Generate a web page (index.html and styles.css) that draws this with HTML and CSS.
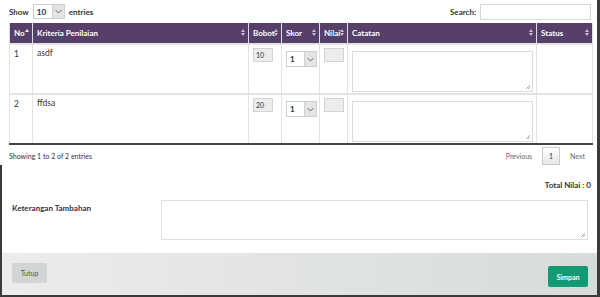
FILE: index.html
```html
<!DOCTYPE html>
<html lang="id">
<head>
    <meta charset="UTF-8">
    <title>Penilaian</title>
    <link rel="stylesheet" href="styles.css">
</head>
<body>
    <div class="modal">
        <div class="modal-top">
            <!-- kontrol atas tabel -->
            <div class="dt-top">
                <label class="dt-length">Show
                    <span class="select small"><span class="sel-val">10</span><span class="sel-btn"><svg width="7" height="5" viewBox="0 0 7 5"><path d="M0.5 1 L3.5 4 L6.5 1" fill="none" stroke="#666" stroke-width="1"/></svg></span></span>
                    entries</label>
                <label class="dt-search">Search: <input type="text" class="search-input"></label>
            </div>

            <table class="grid">
                <colgroup>
                    <col style="width:23px">
                    <col style="width:216px">
                    <col style="width:33px">
                    <col style="width:38px">
                    <col style="width:28px">
                    <col style="width:189px">
                    <col style="width:56px">
                </colgroup>
                <thead>
                    <tr>
                        <th><span>No</span><i class="sort up"></i></th>
                        <th><span>Kriteria Penilaian</span><i class="sort"></i></th>
                        <th><span>Bobot</span><i class="sort"></i></th>
                        <th><span>Skor</span><i class="sort"></i></th>
                        <th><span>Nilai</span><i class="sort"></i></th>
                        <th><span>Catatan</span><i class="sort"></i></th>
                        <th><span>Status</span><i class="sort"></i></th>
                    </tr>
                </thead>
                <tbody>
                    <tr>
                        <td>1</td>
                        <td>asdf</td>
                        <td><span class="box">10</span></td>
                        <td><span class="select skor"><span class="sel-val">1</span><span class="sel-btn"><svg width="7" height="5" viewBox="0 0 7 5"><path d="M0.5 1 L3.5 4 L6.5 1" fill="none" stroke="#666" stroke-width="1"/></svg></span></span></td>
                        <td><span class="box empty"></span></td>
                        <td><span class="note"><i class="grip"></i></span></td>
                        <td></td>
                    </tr>
                    <tr>
                        <td>2</td>
                        <td>ffdsa</td>
                        <td><span class="box">20</span></td>
                        <td><span class="select skor"><span class="sel-val">1</span><span class="sel-btn"><svg width="7" height="5" viewBox="0 0 7 5"><path d="M0.5 1 L3.5 4 L6.5 1" fill="none" stroke="#666" stroke-width="1"/></svg></span></span></td>
                        <td><span class="box empty"></span></td>
                        <td><span class="note"><i class="grip"></i></span></td>
                        <td></td>
                    </tr>
                </tbody>
            </table>

            <div class="dt-bottom">
                <div class="dt-info">Showing 1 to 2 of 2 entries</div>
                <div class="dt-pages">
                    <span class="pg">Previous</span>
                    <span class="pg current">1</span>
                    <span class="pg">Next</span>
                </div>
            </div>
        </div>

        <div class="modal-rest">
            <div class="total">Total Nilai : 0</div>
            <div class="extra">
                <div class="extra-label">Keterangan Tambahan</div>
                <span class="extra-text"><i class="grip"></i></span>
            </div>
            <div class="modal-footer">
                <button class="btn btn-close">Tutup</button>
                <button class="btn btn-save">Simpan</button>
            </div>
        </div>
    </div>
</body>
</html>
```

FILE: styles.css
```css
body, html {
    margin: 0;
    padding: 0;
    background: #3b3b3b;
    font-family: Lato, "Noto Sans", sans-serif;
    color: #333;
    height: 297px;
    overflow: hidden;
}

.modal {
    width: 597px;
    height: 296px;
    display: flex;
    flex-direction: column;
}

.modal-top {
    background: #fff;
    padding: 3px 6px 0 9px;
    height: 162px;
}

.modal-rest {
    background: #fff;
    margin-left: 2px;
    flex: 1;
    display: flex;
    flex-direction: column;
}

/* kontrol atas */
.dt-top {
    display: flex;
    justify-content: space-between;
    align-items: center;
    height: 17px;
    font-size: 8px;
    font-weight: bold;
}

.dt-length, .dt-search {
    display: flex;
    align-items: center;
    gap: 4px;
}

.search-input {
    width: 107px;
    height: 12px;
    border: 1px solid #d6d6d6;
    padding: 1px;
    margin: 0;
}

.select {
    display: inline-flex;
    border: 1px solid #cfcfcf;
    background: #fff;
    box-sizing: border-box;
    font-weight: normal;
}

.select.small {
    width: 32px;
    height: 15px;
}

.select .sel-val {
    flex: 1;
    font-size: 8px;
    padding-left: 3px;
    display: flex;
    align-items: center;
    font-weight: bold;
}

.sel-btn {
    width: 11px;
    display: flex;
    align-items: center;
    justify-content: center;
    background: #e4e4e4;
    border-left: 1px solid #cfcfcf;
}

/* tabel */
.grid {
    width: 583px;
    table-layout: fixed;
    border-collapse: collapse;
    margin-top: 3px;
    font-size: 8.5px;
    border-bottom: 2px solid #444;
}

.grid th {
    background: #563f69;
    color: #fff;
    text-align: left;
    height: 20px;
    padding: 0 4px;
    border: 1px solid #ddd;
    border-top: none;
    position: relative;
    font-size: 8px;
    white-space: nowrap;
    overflow: hidden;
}

.grid th span {
    display: block;
    overflow: hidden;
}

.sort {
    position: absolute;
    right: 3px;
    top: 6px;
    width: 0;
    height: 0;
    border-left: 2.5px solid transparent;
    border-right: 2.5px solid transparent;
    border-bottom: 3px solid #c9bfd1;
}

.sort::after {
    content: "";
    position: absolute;
    left: -2.5px;
    top: 4px;
    border-left: 2.5px solid transparent;
    border-right: 2.5px solid transparent;
    border-top: 3px solid #c9bfd1;
}

.sort.up {
    border-bottom-color: #fff;
}

.sort.up::after {
    display: none;
}

.grid td {
    height: 44px;
    vertical-align: top;
    padding: 3px 3px 0 4px;
    border: 1px solid #e3e3e3;
    border-top: 2px solid #e3e3e3;
}

.grid td:first-child {
    padding-top: 4px;
}

.box {
    display: block;
    width: 20px;
    height: 14px;
    box-sizing: border-box;
    border: 1px solid #d4d4d4;
    background: #ececec;
    font-size: 7px;
    padding: 2px;
}

.select.skor {
    width: 31px;
    height: 16px;
    margin-top: 3px;
}

.note {
    display: block;
    height: 41px;
    width: 181px;
    box-sizing: border-box;
    border: 1px solid #dcdcdc;
    margin-top: 3px;
    position: relative;
}

.grip {
    position: absolute;
    right: 2px;
    bottom: 2px;
    width: 4px;
    height: 4px;
    background: linear-gradient(135deg, transparent 45%, #aaa 45%, #aaa 55%, transparent 55%, transparent 75%, #aaa 75%, #aaa 85%, transparent 85%);
}

.dt-bottom {
    display: flex;
    justify-content: space-between;
    align-items: center;
    margin-top: 2px;
    padding-right: 6px;
}

.dt-info {
    font-size: 7px;
}

.dt-pages {
    display: flex;
    align-items: center;
    gap: 10px;
    font-size: 7px;
    color: #666;
}

.pg.current {
    width: 18px;
    height: 18px;
    box-sizing: border-box;
    border: 1px solid #ccc;
    background: linear-gradient(#fff, #e6e6e6);
    display: flex;
    align-items: center;
    justify-content: center;
    color: #333;
}

/* bagian bawah */
.total {
    text-align: right;
    font-size: 8px;
    font-weight: bold;
    padding: 15px 6px 0 0;
}

.extra {
    display: flex;
    margin-top: 10px;
    padding: 0 9px 0 10px;
}

.extra-label {
    width: 149px;
    font-size: 8px;
    font-weight: bold;
    padding-top: 3px;
}

.extra-text {
    flex: 1;
    height: 40px;
    box-sizing: border-box;
    border: 1px solid #e0e0e0;
    position: relative;
}

.modal-footer {
    margin-top: auto;
    height: 43px;
    background: linear-gradient(90deg, #ececec, #d6dcd9);
    display: flex;
    justify-content: space-between;
    padding: 0 9px 0 10px;
    box-sizing: border-box;
    border-bottom: 1px solid #3b3b3b;
}

.btn {
    border: none;
    border-radius: 2px;
    font-family: Lato, "Noto Sans", sans-serif;
    font-size: 7px;
    cursor: pointer;
}

.btn-close {
    width: 35px;
    height: 20px;
    margin-top: 10px;
    background: #d1d6d4;
    color: #555;
}

.btn-save {
    width: 40px;
    height: 21px;
    margin-top: 13px;
    background: #119a74;
    color: #fff;
    font-weight: bold;
}
```
